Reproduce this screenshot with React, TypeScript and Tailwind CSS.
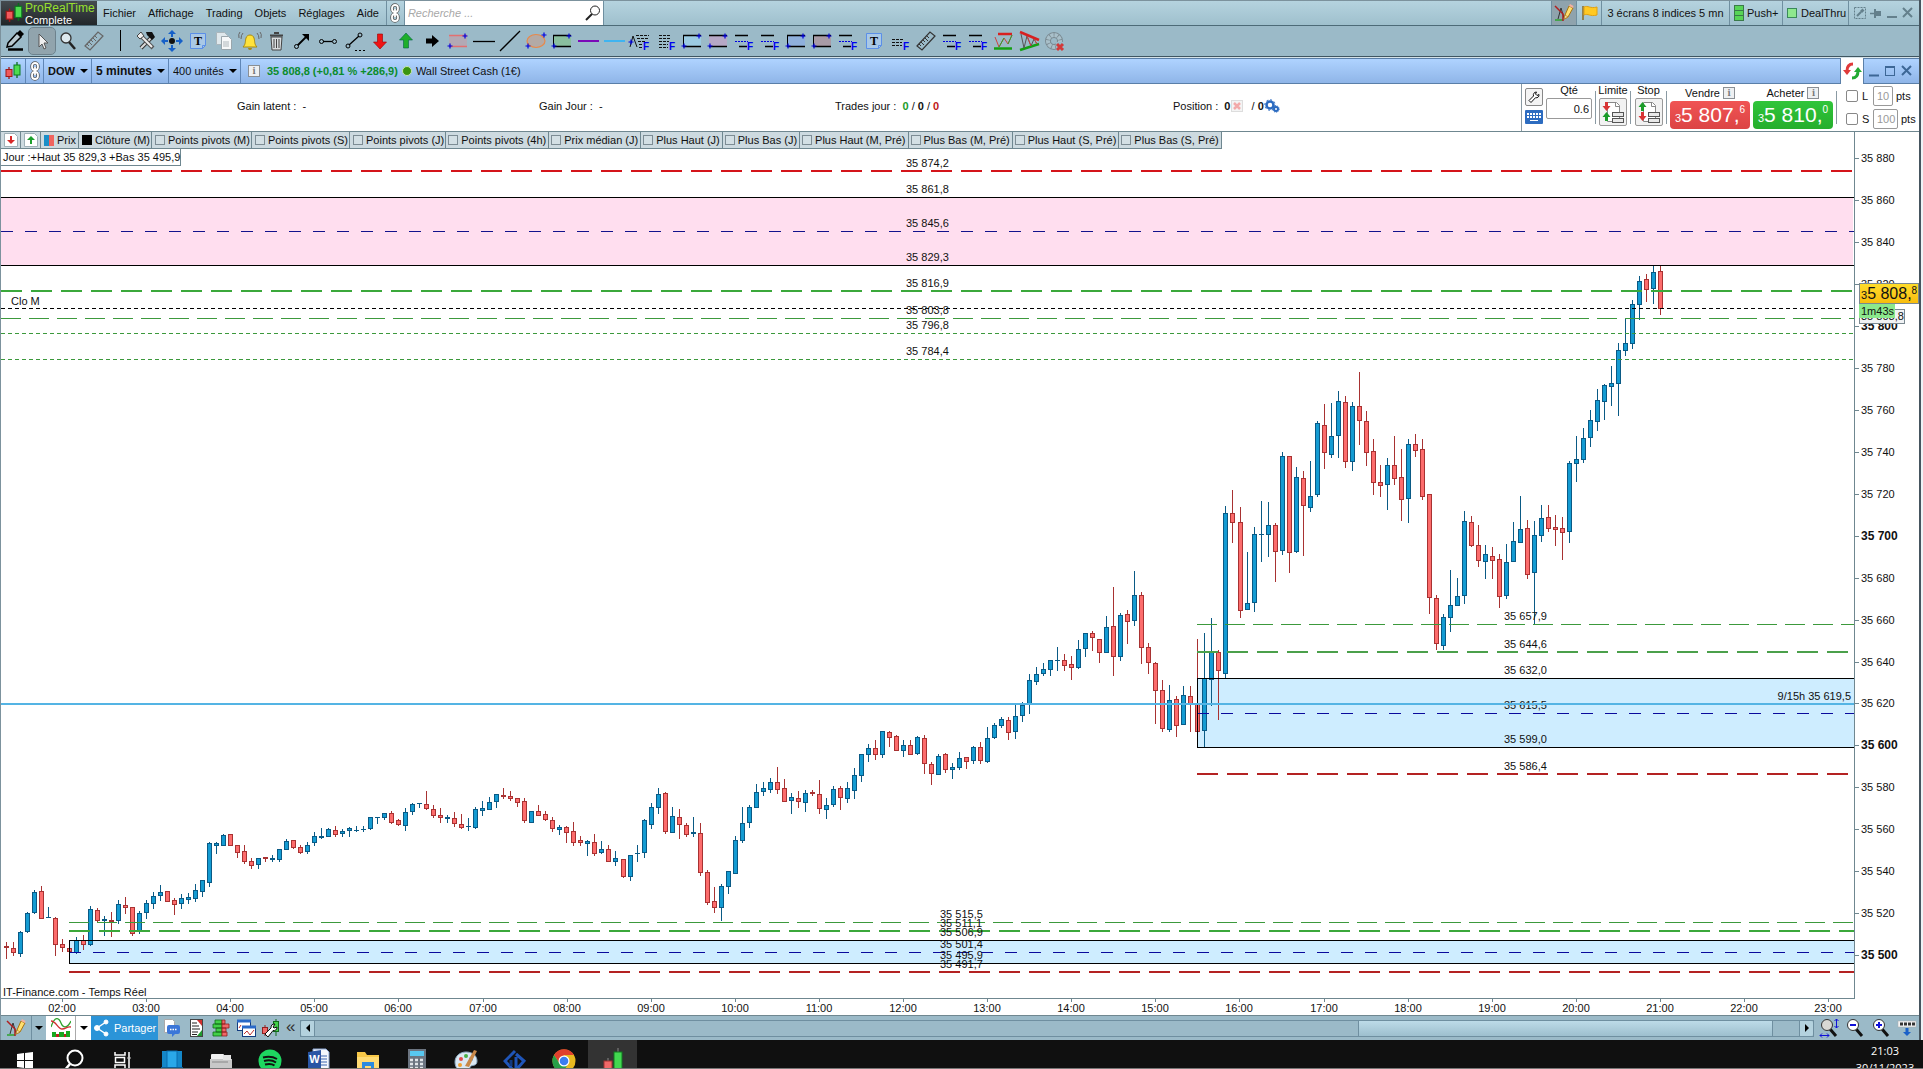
import React from "react"

// one candle per entry : direction (u/d), wick top, body top, body bottom, wick bottom
const CANDLES = `
d942 946 948 959,d942 948 953 956,u931 932 954 957,u912 913 932 933,u890 892 913 914,d886 891 919 919,
u907 917 918 918,d917 918 945 956,d939 944 948 952,d948 948 952 952,u937 940 953 954,d935 940 945 950,
u906 909 945 946,d908 910 921 922,u916 919 921 936,d912 920 922 937,u900 904 921 924,d897 905 908 914,
d907 907 934 936,u911 913 932 934,u900 903 913 919,u892 896 904 909,u885 892 896 901,d891 891 902 902,
d898 900 905 915,u894 898 904 909,u893 897 900 904,u884 890 899 902,u880 880 892 897,u842 843 883 887,
u842 843 846 854,u834 835 846 846,d834 834 846 846,d845 845 853 858,d845 851 862 864,d858 861 866 869,
u858 858 865 869,d857 857 859 862,u855 858 860 862,u849 849 860 862,u839 841 850 850,d840 840 848 849,
d845 847 853 854,u842 845 852 854,u832 836 843 846,u828 836 838 839,u828 829 837 837,d826 830 835 837,
u829 831 834 837,u827 828 831 837,u826 830 831 832,u826 829 830 832,u817 817 829 830,u817 817 818 824,
u813 813 818 820,d811 813 823 824,d819 820 825 826,u808 812 826 831,u803 804 812 815,u803 803 804 808,
d791 804 809 810,d805 809 816 818,d808 815 818 823,u815 817 819 823,d812 818 824 827,d814 824 828 829,
u818 826 827 831,u807 809 828 829,u801 808 811 816,u797 802 810 810,u794 794 802 808,d788 795 797 799,
d791 796 799 801,d798 798 803 807,d798 801 821 823,u811 811 823 823,d805 811 816 816,d811 814 820 821,
d817 820 829 832,u825 827 830 835,d826 827 833 843,d822 831 843 846,d836 840 843 846,u840 841 844 856,
d834 842 854 856,u841 849 853 854,d845 849 862 862,u851 858 862 866,d859 859 877 878,u855 855 877 881,
u845 853 854 862,u819 820 853 858,u803 807 825 829,u788 794 808 814,d792 793 832 834,u807 816 833 833,
d809 817 825 839,d823 825 835 837,u817 832 834 837,d823 833 873 876,d870 872 903 905,d887 901 908 913,
u884 886 908 921,u871 871 887 894,u836 840 874 874,u807 823 841 843,u805 807 823 828,u784 792 808 808,
u782 788 792 796,u778 782 790 793,d767 782 790 794,d779 788 802 802,u793 797 801 814,d791 798 802 808,
u790 793 803 812,d790 792 794 796,d780 794 809 814,u798 805 810 819,u786 789 805 807,d786 788 798 810,
u782 788 799 803,u768 775 791 799,u754 754 776 782,u744 748 755 762,d740 748 755 760,u731 731 755 758,
d731 732 738 747,d735 736 751 751,u740 745 751 757,d740 745 755 755,u736 737 754 755,d735 738 764 774,
d762 764 774 785,u754 756 775 775,d753 754 770 773,u763 767 770 779,u752 758 768 770,d757 757 762 769,
u746 747 761 764,d742 747 761 764,u727 738 762 763,u723 725 738 739,u717 719 726 728,d717 720 733 740,
u705 716 732 739,u702 705 716 722,u674 680 704 714,u667 674 682 685,u663 669 674 676,u660 660 670 676,
u647 660 661 671,d654 660 666 671,d656 664 668 680,u640 649 668 669,u633 633 649 657,d631 633 638 651,
d639 639 653 663,u616 627 653 653,d587 626 657 676,u613 615 657 661,d610 614 622 644,u571 595 621 626,
d592 595 648 664,d643 647 663 674,d662 663 691 724,d680 690 729 732,u685 700 730 732,d696 699 726 737,
u686 695 725 725,d686 696 704 732,d639 704 732 732,u633 678 731 747,u618 652 680 706,d650 652 671 720,
u506 513 674 678,d490 513 523 543,d507 522 611 618,u552 603 610 610,u527 534 603 612,u501 534 535 562,
u502 525 535 557,d523 525 552 582,u452 456 551 555,d456 456 553 573,u467 477 552 553,d471 478 506 556,
u461 496 508 512,u421 423 495 497,d404 425 453 469,u403 436 455 458,u391 401 436 458,d396 402 462 468,
u402 406 462 471,d372 406 421 445,d411 421 453 466,d439 451 483 495,d465 482 486 497,u458 465 485 510,
d436 465 479 485,d449 477 500 521,u439 444 499 523,d434 444 451 457,d439 449 497 500,d494 494 598 614,
d595 598 644 650,u614 617 646 650,u570 605 618 632,u578 596 606 606,u511 521 596 604,d516 522 546 547,
d525 545 561 567,u545 554 562 579,d547 556 561 579,d554 559 597 608,u544 562 596 599,u522 541 562 562,
u496 529 543 543,d520 528 575 579,u521 535 573 625,u505 518 536 542,d505 517 529 532,d515 527 530 546,
d517 528 533 560,u461 463 532 543,u436 459 464 482,u428 438 460 463,u410 420 438 447,u389 400 422 431,
u384 385 402 420,u366 383 387 406,u343 350 384 416,u319 343 351 356,u300 304 344 349,u276 281 305 320,
d274 279 290 302,u266 272 289 304,d266 271 309 315`
  .trim()
  .split(/,\s*/)
  .map(s => ({ up: s[0] === "u", v: s.slice(1).split(" ").map(Number) }))

type Level = { y: number, x?: number, color: string, dash?: string, w?: number }

const LEVELS: Level[] = [
  { y: 170, color: "#d4141a", dash: "21 9", w: 2 },
  { y: 197, color: "#000" },
  { y: 231, color: "#12128c", dash: "12 12" },
  { y: 265, color: "#000" },
  { y: 290, color: "#3ba83b", dash: "21 9", w: 2 },
  { y: 308, color: "#000", dash: "4 3" },
  { y: 318, color: "#3c993c", dash: "20 8" },
  { y: 333, color: "#3c993c", dash: "4 3" },
  { y: 359, color: "#3c993c", dash: "4 3" },
  { y: 624, x: 1197, color: "#3c993c", dash: "20 8" },
  { y: 651, x: 1197, color: "#4ba04b", dash: "21 9", w: 2 },
  { y: 678, x: 1197, color: "#000" },
  { y: 713, x: 1197, color: "#0a0a9c", dash: "12 12" },
  { y: 747, x: 1197, color: "#000" },
  { y: 773, x: 1197, color: "#b42222", dash: "21 9", w: 2 },
  { y: 922, x: 69, color: "#3c993c", dash: "20 8" },
  { y: 930, x: 69, color: "#3ba83b", dash: "21 9", w: 2 },
  { y: 940, x: 69, color: "#000" },
  { y: 952, x: 69, color: "#0a0a9c", dash: "12 12" },
  { y: 963, x: 69, color: "#000" },
  { y: 971, x: 69, color: "#b42222", dash: "21 9", w: 2 },
]

const LEVEL_LABELS: [number, number, string][] = [
  [906, 167, "35 874,2"], [906, 193, "35 861,8"], [906, 227, "35 845,6"], [906, 261, "35 829,3"],
  [906, 287, "35 816,9"], [906, 314, "35 803,8"], [906, 329, "35 796,8"], [906, 355, "35 784,4"],
  [940, 918, "35 515,5"], [940, 927, "35 511,1"], [940, 936, "35 506,9"], [940, 948, "35 501,4"],
  [940, 959, "35 495,9"], [940, 968, "35 491,7"],
  [1504, 620, "35 657,9"], [1504, 648, "35 644,6"], [1504, 674, "35 632,0"], [1504, 709, "35 615,5"],
  [1504, 743, "35 599,0"], [1504, 770, "35 586,4"],
  [11, 305, "Clo M"], [3, 996, "IT-Finance.com - Temps Réel"],
]

const PRICES = Array.from({ length: 20 }, (_, i) => 35880 - i * 20)
const HOURS = Array.from({ length: 22 }, (_, i) => i + 2)

const priceY = (p: number) => Math.round(158 + (35880 - p) * 2.098)
const candleX = (i: number) => 6 + i * 7 + Math.floor(i / 88)
const formatPrice = (p: number) => `35 ${String(p - 35000).padStart(3, "0")}`

function Chart() {
  return (
    <svg className="block h-full w-full" shapeRendering="crispEdges" aria-label="Wall Street Cash 5 minutes">
      <g transform="translate(-1 -132)" fontSize="11" fill="#111">
        <rect x="0" y="197" width="100%" height="69" fill="#ffdeef" />
        <rect x="69" y="940" width="100%" height="24" fill="#ceedff" />
        <rect x="1197" y="678" width="100%" height="70" fill="#ceedff" />
        {CANDLES.map(({ up, v }, i) => {
          const x = candleX(i)
          const h = Math.max(v[2] - v[1], 1)
          const line = up ? "#0a5a85" : "#a83232"
          return (
            <g key={i}>
              <rect x={x} y={v[0]} width="1" height={Math.max(v[3] - v[0], 1)} fill={line} />
              <rect x={x - 2} y={v[1]} width="5" height={h} fill={line} />
              {h > 2 && <rect x={x - 1} y={v[1] + 1} width="3" height={h - 2} fill={up ? "#149bd2" : "#fc6c6c"} />}
            </g>
          )
        })}
        {LEVELS.map((l, i) => {
          const w = l.w || 1
          return (
            <line key={i} x1={l.x || 1} x2="101%" y1={l.y + w / 2} y2={l.y + w / 2}
              stroke={l.color} strokeWidth={w} strokeDasharray={l.dash} />
          )
        })}
        <rect x="69" y="940" width="1" height="24" fill="#000" />
        <rect x="1197" y="678" width="1" height="70" fill="#000" />
        {LEVEL_LABELS.map(([x, y, t]) => <text key={t} x={x} y={y}>{t}</text>)}
        <rect x="0" y="703" width="101%" height="2" fill="#54b4e4" />
      </g>
      <text x="100%" dx="-3" y="568" textAnchor="end" fontSize="11" fill="#111">9/15h 35 619,5</text>
    </svg>
  )
}

function PriceAxis() {
  return (
    <div className="relative w-[65px] shrink-0 border-l border-[#6f8790]">
      <svg className="block h-full w-full">
        {PRICES.map(p => {
          const y = priceY(p) - 132
          const bold = p % 100 === 0
          return (
            <g key={p}>
              <rect x="0" y={y} width="4" height="1" fill="#6f8790" />
              <text x="6" y={y + 4} fontSize={bold ? 12 : 11} fontWeight={bold ? 700 : 400} fill="#111">{formatPrice(p)}</text>
            </g>
          )
        })}
      </svg>
      <div className="absolute top-[177px] left-1 h-[15px] w-[46px] overflow-hidden border border-[#7a8890] bg-[#f0f2f4] pl-px text-[11px] leading-[13px] whitespace-nowrap">35 803,8</div>
      <div className="absolute top-[172px] left-1 h-[14px] w-9 bg-[#8ce88c] pl-[2px] text-[11px] leading-[14px]">1m43s</div>
      <div className="absolute top-[151px] left-1 flex h-[21px] w-[60px] items-baseline border border-[#7a8890] bg-linear-to-b from-[#ffdc2a] to-[#f8bd0c] pl-px leading-[19px] whitespace-nowrap">
        <span className="text-[11px]">3</span>
        <span className="text-[16px]">5 808,</span>
        <span className="self-start text-[10px] leading-[14px]">8</span>
      </div>
    </div>
  )
}

function Chain() {
  return (
    <svg width="12" height="20" viewBox="0 0 12 20" fill="none">
      <g stroke="#555" strokeWidth="3.4">
        <rect x="3" y="2" width="6" height="7" rx="3" /><rect x="3" y="11" width="6" height="7" rx="3" /><path d="M6 6v8" />
      </g>
      <g stroke="#fff" strokeWidth="1.8">
        <rect x="3" y="2" width="6" height="7" rx="3" /><rect x="3" y="11" width="6" height="7" rx="3" /><path d="M6 6v8" />
      </g>
    </svg>
  )
}

function CandleLogo({ size = 18 }: { size?: number }) {
  return (
    <svg width={size} height={size} viewBox="0 0 18 18">
      <path d="M5 5v12" stroke="#a01818" strokeWidth="1.3" />
      <path d="M13 0v16" stroke="#0b6b1e" strokeWidth="1.3" />
      <rect x="2" y="7.500" width="6" height="7" fill="#f0595c" stroke="#a01818" />
      <rect x="10" y="3" width="6" height="10" fill="#4fdc50" stroke="#0b7b1e" />
    </svg>
  )
}

function PencilChart() {
  return (
    <svg width="20" height="20" viewBox="0 0 20 20" fill="none">
      <path d="M1 17h8" stroke="#2ea32e" strokeWidth="1.500" />
      <path d="M4 16 7 5l3 10 2-4" stroke="#333" />
      <path d="M1 3l8 8v7" stroke="#b02020" strokeWidth="1.500" />
      <path d="m10 16 1-4 4-9 4 2-5 9z" fill="#ffe070" stroke="#a87410" />
      <path d="m10 16 1-4 3 2z" fill="#f6deb0" stroke="#a87410" strokeWidth=".6" />
      <path d="m15 3 4 2 .500-2-3.500-2z" fill="#f3b0a0" />
    </svg>
  )
}

function Caret() {
  return <svg width="8" height="4" viewBox="0 0 8 4" className="pointer-events-none shrink-0"><path d="M0 0h8L4 4z" fill="#000" /></svg>
}

function InfoIcon() {
  return (
    <span className="flex h-3 w-3 items-center justify-center border border-[#8a8f94] bg-[#eef0f2] font-serif text-[10px] leading-none font-bold text-[#777]">i</span>
  )
}

const Plus = ({ x, y }: { x: number, y: number }) => (
  <path d={`M${x - 2.5} ${y}h5M${x} ${y - 2.5}v5`} stroke="#0000e0" strokeWidth="1.200" />
)

const FMark = () => <text x="16" y="22" fontSize="10" fontWeight="700" fill="#0000f0">F</text>

function RectIcon({ fill, line = "#000", open }: { fill: string, line?: string, open?: boolean }) {
  return (
    <>
      <rect x="4" y="8" width="18" height="10" fill={fill} />
      <path d="M4 7.500h18M4 18.500h18" stroke={line} strokeWidth="1.500" />
      {!open && <path d="M4.500 7v11" stroke={line} />}
      <Plus x={20} y={8} /><Plus x={5} y={18} />
    </>
  )
}

const FLines = () => (
  <>
    <path d="M4 7.500h13M8 18.500h8" stroke="#000" strokeWidth="1.500" />
    <path d="M4 13.500h13" stroke="#0000e0" strokeDasharray="2 1" />
    <FMark />
  </>
)

const TextNote = () => (
  <>
    <path d="M5.500 5.500h15v12l-3 3h-12z" fill="#a9c8e6" stroke="#5b8fe8" />
    <path d="M20.500 17.500h-3v3" fill="none" stroke="#5b8fe8" />
    <text x="13" y="17" textAnchor="middle" fontSize="12" fontWeight="700" fontFamily="Liberation Serif, serif">T</text>
  </>
)

const Ruler = ({ color }: { color: string }) => (
  <>
    <path d="M4 18 17 4l5 4L9 22z" fill="none" stroke={color} strokeWidth="1.200" />
    <path d="m6 16 2 2m0-4 3 3m-1-5 2 2m0-4 3 3m-1-5 2 2" stroke={color} />
  </>
)

const Magnifier = () => (
  <>
    <path d="m14 14 6 7" stroke="#222" strokeWidth="2.500" />
    <circle cx="11" cy="10" r="5" fill="#dce8ee" stroke="#333" strokeWidth="1.300" />
  </>
)

const TOOLS: [string, React.ReactNode][] = [
  ["Crayon", <><path d="m5 15 9-10 4 4-9 9-5 1z" fill="#b9c9d0" stroke="#000" strokeWidth="1.500" /><path d="m14 5 3-3 4 4-3 3z" fill="#000" /><path d="M5 21.500h15" stroke="#000" strokeWidth="2.500" /></>],
  ["Curseur", <path d="M10 6v13l3-3 2 5 2-1-2-5h4z" fill="#eee" stroke="#555" />],
  ["Zoom", <Magnifier />],
  ["Règle", <Ruler color="#666" />],
  ["", <path d="M13.500 2v21" stroke="#000" />],
  ["Outils", <><path d="m8 20 12-12" stroke="#333" strokeWidth="4" /><path d="m8 20 12-12" stroke="#ddd" strokeWidth="2" /><path d="m6 6 14 14" stroke="#555" strokeWidth="4" /><path d="m6 6 13 13" stroke="#eee" strokeWidth="2" /><path d="M13 4h6l3 5-3 3-5-5z" fill="#111" /><path d="M4 8l4-4 3 4-4 3z" fill="#eee" stroke="#444" /></>],
  ["Déplacer", <><path d="m13 2 4 4h-3v3h-2V6H9zm0 22 4-4h-3v-3h-2v3H9zM2 13l4-4v3h3v2H6v3zm22 0-4-4v3h-3v2h3v3z" fill="#1660c8" /><circle cx="13" cy="13" r="3" fill="#111" /></>],
  ["Texte", <TextNote />],
  ["Copier", <><path d="M5.500 4.500h8l3 3v9h-11z" fill="#dfe8ec" stroke="#aab6bc" /><path d="M10.500 8.500h7l3 3v10h-10z" fill="#f6f8f9" stroke="#9aa6ac" /><path d="M12 14h6m-6 2h6m-6 2h6" stroke="#b0b8bc" /></>],
  ["Alerte", <><path d="M6 19c3-3 2-6 3-9 1-4 7-4 8 0 1 3 0 6 3 9z" fill="#ffe23a" stroke="#a88a10" /><path d="M11 20a2 2 0 0 0 4 0z" fill="#a88a10" /><path d="M6 5q-2 2-2 6m16-6q2 2 2 6M3 4q-2 2-1 6M23 4q2 2 1 6" fill="none" stroke="#666" /></>],
  ["Supprimer", <><path d="M8 9h11l-1 13H9z" fill="#d8dcde" stroke="#444" /><path d="M7 7.500h13M11 5h5" stroke="#444" strokeWidth="2" /><path d="M11 11v9m2.500-9v9m2.500-9v9" stroke="#444" /></>],
  ["Flèche", <><path d="m8 18 9-9" stroke="#000" strokeWidth="1.800" /><path d="M13 6h7v7z" fill="#000" /><circle cx="7.500" cy="18.500" r="2" fill="#9bbac8" stroke="#000" /></>],
  ["Segment", <><path d="M8 13.500h9" stroke="#000" strokeWidth="1.300" /><circle cx="6.500" cy="13.500" r="2" fill="none" stroke="#000" /><circle cx="19.500" cy="13.500" r="2" fill="none" stroke="#000" /></>],
  ["Segment libre", <><path d="m8 17 10-9" stroke="#000" strokeWidth="1.300" /><circle cx="7" cy="18" r="2" fill="none" stroke="#000" /><circle cx="19" cy="7" r="2" fill="none" stroke="#000" /><path d="M14 22.500h10" stroke="#000" strokeDasharray="2 2" /></>],
  ["Flèche rouge", <path d="M10.500 6h5v8h4L13 21l-6.500-7h4z" fill="#f01414" stroke="#900" strokeWidth=".6" />],
  ["Flèche verte", <path d="M10.500 20h5v-8h4L13 5l-6.500 7h4z" fill="#1fae2a" stroke="#064" strokeWidth=".6" />],
  ["Flèche noire", <path d="M7 10.500h6V7l7 6-7 6v-3.500H7z" fill="#000" />],
  ["Canal", <RectIcon fill="#b3a9b4" line="#e27070" open />],
  ["Horizontale", <path d="M2 13.500h22" stroke="#000" strokeWidth="1.300" />],
  ["Droite", <path d="M3 23 23 3" stroke="#000" strokeWidth="1.300" />],
  ["Ellipse", <><ellipse cx="13" cy="13" rx="9" ry="6.500" fill="#b3aaa6" stroke="#e8894a" strokeWidth="1.200" /><Plus x={21} y={7} /><Plus x={5} y={18} /></>],
  ["Rectangle vert", <RectIcon fill="#8abf9f" />],
  ["Ligne violette", <path d="M3 13h21" stroke="#7a0ab8" strokeWidth="2" />],
  ["Ligne bleue", <path d="M3 13h21" stroke="#3fb4f0" strokeWidth="2" />],
  ["Fibonacci 1", <><path d="m3 19 3-11 4 11" fill="none" stroke="#111" /><Plus x={4} y={14} /><path d="M9 7.500h13M10 10.500h12M11 13.500h8M12 16.500h4M12 19.500h4" stroke="#111" strokeDasharray="3 1" /><FMark /></>],
  ["Fibonacci 2", <><path d="M6 7.500h12M6 10.500h12M6 13.500h10M6 16.500h9M6 19.500h9" stroke="#111" strokeDasharray="3 1" /><FMark /></>],
  ["Rectangle cyan", <RectIcon fill="#9ccbe2" />],
  ["Rectangle rose", <RectIcon fill="#b6a8c6" open />],
  ["Fibonacci 3", <FLines />],
  ["Fibonacci 4", <FLines />],
  ["Rectangle bleu", <RectIcon fill="#8fb0dc" />],
  ["Rectangle mauve", <RectIcon fill="#a89ba6" />],
  ["Fibonacci 5", <FLines />],
  ["Note", <TextNote />],
  ["Fibonacci 6", <><path d="M5 11.500h12M5 14.500h10M5 17.500h10" stroke="#111" strokeDasharray="3 1" /><FMark /></>],
  ["Mesure", <Ruler color="#333" />],
  ["Fibonacci 7", <FLines />],
  ["Fibonacci 8", <FLines />],
  ["Figure 1", <><path d="M7 6h14" stroke="#d82020" strokeWidth="2.500" /><path d="M3 20.500h18" stroke="#14a014" strokeWidth="2.500" /><path d="m4 9 4 10 5-9 4 6 4-9" fill="none" stroke="#d04040" /><path d="m8 19 5-9m4 6 4-9" stroke="#2fa02f" /></>],
  ["Figure 2", <><path d="m3 4 19 8" stroke="#d82020" strokeWidth="2.500" /><path d="m3 22 19-6" stroke="#14a014" strokeWidth="2.500" /><path d="m4 6 3 14 3-12 4 10 3-7 3 5" fill="none" stroke="#555" /><path d="m10 8 4 10m3-7 3 5" stroke="#d04040" /></>],
  ["Cycle", <><circle cx="11" cy="13" r="6" fill="none" stroke="#7b8b93" strokeWidth="6" /><circle cx="11" cy="13" r="6" fill="none" stroke="#a9c0ca" strokeWidth="4" strokeDasharray="3.200 .8" /><rect x="13" y="14" width="9" height="9" fill="#9bbac8" /><path d="m14 16 6 6m0-6-6 6" stroke="#d23a3a" strokeWidth="3" /></>],
]

const INDICATORS = [
  "Points pivots (M)", "Points pivots (S)", "Points pivots (J)", "Points pivots (4h)", "Prix médian (J)", "Plus Haut (J)",
  "Plus Bas (J)", "Plus Haut (M, Pré)", "Plus Bas (M, Pré)", "Plus Haut (S, Pré)", "Plus Bas (S, Pré)",
]

function MenuBar() {
  return (
    <header className="flex h-[25px] items-stretch border-b border-[#4d6b78] bg-linear-to-b from-[#b5d3df] to-[#9fc0cd]">
      <div className="flex w-24 items-center gap-px bg-linear-to-b from-[#454b4f] to-[#22272a] pl-[3px]">
        <CandleLogo size={20} />
        <div className="whitespace-nowrap">
          <div className="text-[12px] leading-[13px] text-[#97e02e]">ProRealTime</div>
          <div className="text-[11px] leading-[10px] text-white">Complete</div>
        </div>
      </div>
      <nav className="flex items-center gap-3 pr-[7px] pl-[6px]">
        {["Fichier", "Affichage", "Trading", "Objets", "Réglages", "Aide"].map(m => (
          <button key={m} type="button">{m}</button>
        ))}
      </nav>
      <div className="flex w-[19px] items-center justify-center border-x border-[#6f8fa0]"><Chain /></div>
      <label className="flex w-[199px] items-center border-r border-[#6f8fa0] bg-white pr-[2px] pl-[3px]">
        <input aria-label="Recherche" placeholder="Recherche ..." className="min-w-0 flex-1 text-[11px] italic outline-none placeholder:text-[#a8a8a8]" />
        <svg width="16" height="16" viewBox="0 0 16 16"><circle cx="10" cy="5.500" r="4.500" fill="none" stroke="#222" /><path d="m7 9-6 6" stroke="#222" strokeWidth="2" /></svg>
      </label>
      <div className="ml-auto flex items-stretch [&>*]:flex [&>*]:items-center [&>*]:border-r [&>*]:border-[#6f8fa0]">
        <button type="button" aria-label="Dessin" className="w-[26px] justify-center border-l bg-[#8fa3ad]"><PencilChart /></button>
        <button type="button" aria-label="Drapeau" className="w-[25px] justify-center">
          <svg width="17" height="16" viewBox="0 0 17 16"><path d="M2 1v14" stroke="#8a6a20" strokeWidth="1.500" /><path d="M3 2c4-2 6 2 13 0v8c-7 2-9-2-13 0z" fill="#ffc922" stroke="#e0a010" /></svg>
        </button>
        <button type="button" className="w-32 justify-center">3 écrans 8 indices 5 mn</button>
        <button type="button" className="w-[53px] gap-[3px] pl-1">
          <span className="flex h-4 w-[10px] flex-col divide-y divide-[#3a7a4a] border border-[#3a7a4a] bg-[#57d457]"><i className="flex-1" /><i className="flex-1" /><i className="flex-1" /></span>Push+
        </button>
        <button type="button" className="w-[66px] gap-1 pl-1"><span className="h-[10px] w-[10px] border border-[#3a8a5a] bg-[#8ee88e]" />DealThru</button>
        <div className="gap-[5px] border-r-0! pr-[6px] pl-1">
          <svg width="60" height="14" viewBox="0 0 60 14" fill="none" stroke="#64808c">
            <rect x="1.500" y="1.500" width="11" height="11" strokeDasharray="2 1" /><path d="m4 10 4-4" strokeWidth="2" /><path d="M10 3 8 5l1 1 2-2" strokeWidth="1.500" />
            <path d="M17 7.500h4" strokeWidth="1.500" /><path d="M21 3h2v2h5v5h-5v2h-2z" fill="#64808c" stroke="none" />
            <path d="M34 11h10M50 2l9 9m0-9-9 9" strokeWidth="2" />
          </svg>
        </div>
      </div>
    </header>
  )
}

function Toolbar() {
  return (
    <div className="flex h-[31px] items-center border-b border-[#3f5661] bg-[#9bbac8] pl-[2px]">
      {TOOLS.map(([name, icon], i) => {
        const svg = <svg width="26" height="26" viewBox="0 0 26 26">{icon}</svg>
        return name
          ? <button key={i} type="button" title={name} className={i === 1 ? "rounded-sm bg-[#91a4ad] outline outline-[#6d828d]" : ""}>{svg}</button>
          : <span key={i}>{svg}</span>
      })}
    </div>
  )
}

function Picker({ label, value, className }: { label: string, value: string, className: string }) {
  return (
    <label className="relative flex items-center border-r border-[#5f86b6]">
      <select aria-label={label} className={`h-full appearance-none pl-[4px] outline-none ${className}`} defaultValue={value}>
        <option>{value}</option>
      </select>
      <span className="pointer-events-none absolute right-[3px]"><Caret /></span>
    </label>
  )
}

function TitleBar() {
  return (
    <div className="flex h-[26px] items-stretch border-y border-[#5a7fa8] bg-linear-to-b from-[#afd3ff] to-[#8fb5e8]">
      <div className="flex w-[25px] items-center justify-center border-r border-[#5f86b6]"><CandleLogo /></div>
      <div className="flex w-[18px] items-center justify-center border-r border-[#5f86b6]"><Chain /></div>
      <Picker label="Valeur" value="DOW" className="w-[47px] font-bold" />
      <Picker label="Unité de temps" value="5 minutes" className="w-[76px] text-[12px] font-bold" />
      <Picker label="Historique" value="400 unités" className="w-[71px]" />
      <div className="flex items-center pl-[7px]">
        <InfoIcon />
        <span className="ml-[7px] font-bold text-[#0c8c2c]">35 808,8 (+0,81 % +286,9)</span>
        <span className="mx-[4px] h-[10px] w-[10px] rounded-full border border-[#c8e6b0] bg-[#3a9410]" />
        <span>Wall Street Cash (1€)</span>
      </div>
      <div className="-my-px ml-auto flex w-6 items-center justify-center border-x border-[#5a7fa8] bg-white">
        <svg width="19" height="18" viewBox="0 0 19 18" fill="none">
          <path d="M10 2c-5 0-6 3-6 7" stroke="#e03a3a" strokeWidth="3" /><path d="M0 8h8l-4 5z" fill="#e03a3a" />
          <path d="M9 16c5 0 6-3 6-7" stroke="#22aa33" strokeWidth="3" /><path d="M11 10h8l-4-5z" fill="#22aa33" />
        </svg>
      </div>
      <svg className="my-auto mr-[7px] ml-[5px]" width="43" height="12" viewBox="0 0 43 12" fill="none" stroke="#3d6796">
        <path d="M0 10.500h10M33 1l9 9m0-9-9 9" strokeWidth="2" /><rect x="16.500" y="1.500" width="9" height="9" /><path d="M16 2h10" strokeWidth="2" />
      </svg>
    </div>
  )
}

function OrderIcon({ flip }: { flip?: boolean }) {
  return (
    <svg width="24" height="24" viewBox="0 0 24 24">
      <path d="M6.500 2.500h9l3 3v16h-12z" fill="#fff" stroke="#888" />
      <path d="M14.500 2.500v4h4" fill="none" stroke="#888" />
      <path d="M4 2h3v4h2.500l-4 5-4-5H4z" fill={flip ? "#1c9c2a" : "#d83434"} transform={flip ? "rotate(180 5.500 6.500)" : undefined} />
      <path d="M4 21h3v-4h2.500l-4-5-4 5H4z" fill={flip ? "#d83434" : "#1c9c2a"} transform={flip ? "rotate(180 5.500 16.500)" : undefined} />
      <rect x="11.500" y="12.500" width="11" height="4" fill="#e8e8e8" stroke="#555" /><rect x="11.500" y="18.500" width="11" height="4" fill="#e8e8e8" stroke="#555" />
    </svg>
  )
}

function DealButton({ label, last, main, color }: { label: string, last: string, main: string, color: string }) {
  return (
    <div className="flex w-20 flex-col items-center">
      <span className="flex h-[17px] items-center gap-[3px]">{label}<InfoIcon /></span>
      <button type="button" className={`flex h-7 w-20 items-baseline justify-center rounded-sm leading-7 text-white ${color}`}>
        <span className="text-[11px]">3</span>
        <span className="text-[21px]">{main}</span>
        <span className="self-start text-[10px] leading-[18px]">{last}</span>
      </button>
    </div>
  )
}

function Distance({ id, value, width }: { id: string, value: string, width: string }) {
  return (
    <div className="flex h-[21px] items-center">
      <input id={`use-${id}`} type="checkbox" className="h-3 w-3 appearance-none rounded-xs border border-[#888] bg-white" />
      <label htmlFor={`use-${id}`} className="w-[15px] pl-[4px]">{id}</label>
      <input aria-label={`Distance ${id}`} defaultValue={value} className={`h-5 rounded-xs border border-[#999] pl-[3px] text-[#999] outline-none ${width}`} />
      <span className="pl-[3px]">pts</span>
    </div>
  )
}

const Sep = () => <span className="mt-[7px] h-[33px] w-px bg-[#8a9aa3]" />

function TradingPanel() {
  return (
    <section className="flex h-[47px] bg-white">
      <div className="flex flex-1 items-center pb-[3px] pl-[236px] whitespace-pre">
        <span className="w-[302px]">Gain latent :  -</span>
        <span className="w-[296px]">Gain Jour :  -</span>
        <span className="w-[338px]">Trades jour :  <b className="text-[#1c9c2a]">0</b> / <b>0</b> / <b className="text-[#c01818]">0</b></span>
        <span className="flex items-center">Position :  <b>0</b>
          <svg className="mr-[2px] ml-px" width="12" height="12" viewBox="0 0 12 12"><rect x=".5" y=".5" width="11" height="11" fill="#f4f4f4" stroke="#ddd" /><path d="m3 3 6 6m0-6-6 6" stroke="#f3aaaa" strokeWidth="2.500" /></svg>
          {"  / "}<b>0</b>
          <svg width="16" height="14" viewBox="0 0 16 14" fill="none" stroke="#2a6ac0"><circle cx="6" cy="6" r="3.500" strokeWidth="2.500" /><circle cx="6" cy="6" r="5.200" strokeDasharray="2 2" /><circle cx="12" cy="10" r="2" strokeWidth="2" /><circle cx="12" cy="10" r="3.200" strokeDasharray="1 1" /></svg>
        </span>
      </div>
      <div className="flex w-[398px] gap-[3px] border-l border-[#8a9aa3] pl-[3px]">
        <div className="flex flex-col gap-1 pt-1">
          <button type="button" aria-label="Options" className="flex h-[18px] w-[18px] items-center justify-center rounded-xs border border-[#888] bg-[#f4f4f4]">
            <svg width="14" height="14" viewBox="0 0 14 14"><path d="M2 10.500 6.500 6c-.6-2 .6-4 3-4L8.500 4l1.500 1.500 2-1c.3 2.400-1.500 3.600-3.500 3.200L4 12.500z" fill="#fff" stroke="#111" /></svg>
          </button>
          <button type="button" aria-label="Clavier">
            <svg width="18" height="14" viewBox="0 0 18 14"><rect width="18" height="14" rx="1" fill="#2d6cc0" /><path d="M2 4h14M2 7h14" stroke="#fff" strokeWidth="2" strokeDasharray="2 1" /><path d="M5 10.500h8" stroke="#fff" /></svg>
          </button>
        </div>
        <label className="flex w-[46px] flex-col items-center leading-[13px]">Qté
          <input defaultValue="0.6" className="mt-px h-[21px] w-full rounded-xs border border-[#999] pr-[2px] text-right outline-none" />
        </label>
        <Sep />
        <label className="flex w-7 flex-col items-center leading-[13px]">Limite
          <button type="button" className="mt-px flex h-7 w-7 items-center justify-center rounded-xs border border-[#999] bg-[#f2f2f2]"><OrderIcon /></button>
        </label>
        <Sep />
        <label className="flex w-[29px] flex-col items-center leading-[13px]">Stop
          <button type="button" className="mt-px flex h-7 w-7 items-center justify-center rounded-xs border border-[#999] bg-[#f2f2f2]"><OrderIcon flip /></button>
        </label>
        <Sep />
        <DealButton label="Vendre" main="5 807," last="6" color="bg-linear-to-b from-[#f05454] to-[#dc4444]" />
        <DealButton label="Acheter" main="5 810," last="0" color="bg-linear-to-b from-[#30c53a] to-[#25ae2c]" />
        <Sep />
        <div className="flex flex-col justify-center gap-[2px] pl-[6px]">
          <Distance id="L" value="10" width="w-[20px]" />
          <Distance id="S" value="100" width="w-[25px]" />
        </div>
      </div>
    </section>
  )
}

function IndicatorBar() {
  return (
    <div className="absolute top-0 left-0">
      <div className="flex h-[17px] w-max border-b border-[#6f8790] [&>*]:flex [&>*]:items-center [&>*]:border-r [&>*]:border-[#6f8790] [&>*]:bg-[#cddae0]">
        {["#d82828", "#1ea02e"].map((c, i) => (
          <button key={c} type="button" aria-label={i ? "Monter" : "Descendre"} className="w-5 justify-center">
            <svg width="14" height="14" viewBox="0 0 14 14"><path d="M.5.500h10l3 3v10H.5z" fill="#fff" stroke="#9fb0b8" /><path d="M7 11 3 7h3V3h2v4h3z" fill={c} transform={i ? "rotate(180 7 7)" : undefined} /></svg>
          </button>
        ))}
        <div className="gap-[3px] pr-[2px] pl-[3px]"><span className="h-[11px] w-[10px] bg-linear-to-r from-[#1a8fc8] from-50% to-[#f0645f] to-50%" />Prix</div>
        <div className="gap-[3px] pr-px pl-[3px]"><span className="h-[10px] w-[10px] bg-black" />Clôture (M)</div>
        {INDICATORS.map((t, i) => (
          <label key={t} className={i < 3 ? "gap-[3px] pr-px pl-[3px]" : "gap-[3px] px-[2px]"}>
            <input type="checkbox" className="h-[10px] w-[10px] appearance-none border border-[#7d8c94] bg-[#d3dfe4]" />{t}
          </label>
        ))}
      </div>
      <div className="flex h-[17px] w-[180px] items-center border-r border-b border-[#6f8790] bg-white pl-[2px] whitespace-nowrap">Jour :+Haut 35 829,3 +Bas 35 495,9</div>
    </div>
  )
}

function TimeAxis() {
  return (
    <div className="flex h-[17px] bg-white">
      <svg className="block h-full w-full border-t border-[#6f8790]">
        {HOURS.map((h, i) => {
          const x = 61 + Math.round(i * 84.1)
          return (
            <g key={h}>
              <rect x={x} y="0" width="1" height="3" fill="#6f8790" />
              <text x={x} y="13" fontSize="11" textAnchor="middle" fill="#111">{String(h).padStart(2, "0")}:00</text>
            </g>
          )
        })}
      </svg>
      <div className="w-16 shrink-0" />
    </div>
  )
}

function BottomBar() {
  return (
    <div className="flex h-[25px] items-stretch border-t border-[#6f8790] bg-[#9bbac8]">
      <button type="button" aria-label="Dessin" className="flex w-[31px] items-center justify-center border-r border-[#6f8fa0]"><PencilChart /></button>
      <button type="button" aria-label="Menu dessin" className="flex w-[14px] items-center justify-center"><Caret /></button>
      <button type="button" aria-label="Indicateurs" className="flex w-[30px] items-center justify-center border-r border-[#aaa] bg-white">
        <svg width="20" height="20" viewBox="0 0 20 20" fill="none"><path d="M0 9C4-3 8 0 10 5s6 6 10-2" stroke="#2ea32e" strokeWidth="1.300" /><path d="M0 3c5 0 7 8 11 8s5-3 9-2" stroke="#d03030" strokeWidth="1.300" /><path d="M1 19v-5h4v2h3v-2h5v2h2v-3h4v6z" fill="#18a820" /><path d="M5 19v-3h3v3m5 0v-3h2v3" fill="#c02020" /></svg>
      </button>
      <button type="button" aria-label="Menu indicateurs" className="flex w-[15px] items-center justify-center bg-white"><Caret /></button>
      <button type="button" className="flex w-[67px] items-center gap-[5px] bg-[#2b94d8] pl-[3px] text-white">
        <svg width="15" height="18" viewBox="0 0 15 18" fill="#fff" stroke="#fff" className="shrink-0"><path d="M12 3 3 9l9 6" fill="none" strokeWidth="1.500" /><circle cx="12" cy="3" r="2" /><circle cx="3" cy="9" r="2.500" /><circle cx="12" cy="15" r="2" /></svg>
        Partager
      </button>
      <div className="flex items-center gap-[5px] pl-[3px]">
        <svg width="20" height="20" viewBox="0 0 20 20"><path d="M3.500 1.500h8l2 2v11h-10z" fill="#fff" stroke="#aaa" /><path d="M8 7h9q2 0 2 2v5q0 2-2 2h-3l-3 3v-3H8q-2 0-2-2V9q0-2 2-2z" fill="#3b76d8" /><path d="M9 11.500h7" stroke="#fff" strokeWidth="1.500" strokeDasharray="1.500 1" /></svg>
        <svg width="20" height="20" viewBox="0 0 20 20"><rect x="4.500" y="1.500" width="12" height="17" fill="#fff" stroke="#444" /><path d="M11 2h5v6z" fill="#d03030" /><path d="M16 18h-5l5-6z" fill="#209a30" /><path d="M6 5h5M6 8h7M6 11h8M6 14h6M6 16.500h5" stroke="#222" /></svg>
        <svg width="20" height="20" viewBox="0 0 20 20" strokeWidth=".8"><path d="M4 2h7v4H4zM2 6h9v4H2zM5 10h6v4H5zM2 14h9v4H2z" fill="#42d048" stroke="#106a18" /><path d="M11 2h3v4h-3zM11 6h7v4h-7zM11 10h4v4h-4zM11 14h5v4h-5z" fill="#f06868" stroke="#902020" /></svg>
        <svg width="20" height="20" viewBox="0 0 20 20"><rect x="1.500" y="2.500" width="13" height="10" fill="#fff" stroke="#123c80" /><path d="M1 3h14" stroke="#2a6ac8" strokeWidth="3" /><rect x="6.500" y="8.500" width="13" height="10" fill="#fff" stroke="#123c80" /><path d="M6 9h14" stroke="#2a6ac8" strokeWidth="3" /><path d="m8 16 3-3 3 4 4-5M3 10l2-3" fill="none" stroke="#c03030" /></svg>
        <svg width="20" height="20" viewBox="0 0 20 20"><path d="M15 1v17" stroke="#106a18" /><rect x="12.500" y="3.500" width="5" height="10" fill="#42d048" stroke="#106a18" /><path d="M4 7v11" stroke="#902020" /><rect x="1.500" y="9.500" width="5" height="6" fill="#f06868" stroke="#902020" /><path d="m4 16 6-6c0-3 1-4 4-4l-2 3 1 1 3-1c0 3-2 4-4 3.500L7 19z" fill="#fff" stroke="#111" /></svg>
        <span className="-mt-1 text-[17px] leading-none text-[#333]">«</span>
      </div>
      <div className="my-auto ml-[5px] flex h-[17px] flex-1 border border-[#6f8fa0]">
        <button type="button" aria-label="Reculer" className="flex w-[14px] items-center justify-center rounded-l-xs border-r border-[#6f8fa0] bg-[#b4d2de]"><svg width="4" height="8" viewBox="0 0 4 8"><path d="M4 0v8L0 4z" /></svg></button>
        <div className="flex flex-1 justify-end pr-[26px]">
          <div className="w-[28.500%] border-x border-[#6f8fa0] bg-linear-to-b from-[#bddbe8] to-[#9dbfce]" />
        </div>
        <button type="button" aria-label="Avancer" className="flex w-[14px] items-center justify-center rounded-r-xs border-l border-[#6f8fa0] bg-[#b4d2de]"><svg width="4" height="8" viewBox="0 0 4 8"><path d="M0 0v8l4-4z" /></svg></button>
      </div>
      <div className="flex items-center gap-[6px] pr-[2px] pl-[5px]">
        {[0, 1, 2].map(i => (
          <svg key={i} width="20" height="20" viewBox="0 0 20 20">
            <path d="m11 11 6 7" stroke="#111" strokeWidth="3" /><circle cx="8" cy="7" r="5.500" fill={i ? "#fff" : "#d8d8d4"} stroke="#333" />
            {i > 0 && <path d={i === 1 ? "M5 7h6" : "M5 7h6M8 4v6"} stroke="#1010d8" strokeWidth="2" />}
            {i === 0 && <path d="M17.500 1v9M15.500 3l2-2 2 2m-4 5 2 2 2-2M1 17.500h9M3 15.500l-2 2 2 2m5-4 2 2-2 2" fill="none" stroke="#1010d8" />}
          </svg>
        ))}
        <svg width="20" height="20" viewBox="0 0 20 20"><rect x="1" y="3" width="18" height="6" fill="#f4f4f4" stroke="#aaa" strokeWidth=".5" /><path d="M3 6h15" stroke="#333" strokeWidth="3" strokeDasharray="3 1" /><path d="M8.500 10h3v4H14l-4 4-4-4h2.500z" fill="#1a60c8" /></svg>
      </div>
    </div>
  )
}

const APPS: [string, React.ReactNode][] = [
  ["Démarrer", <path d="m4 6 7-1v7H4zm8-1 8-1v8h-8zM4 13h7v7l-7-1zm8 0h8v8l-8-1z" fill="#fff" />],
  ["Rechercher", <g fill="none" stroke="#fff" strokeWidth="2"><circle cx="13" cy="10" r="7.500" /><path d="m8 16-6 7" strokeWidth="2.500" /></g>],
  ["Vue des tâches", <path d="M4 4v3h10V4M4 20v-3h10v3M4.500 9.500h9v5h-9zM18 4v5m0 2v9M16.500 10h3" fill="none" stroke="#fff" strokeWidth="1.500" />],
  ["Téléphone", <><path d="M2 3h20v17H2z" fill="#1487c8" /><rect x="7" y="3" width="10" height="17" fill="#2aa8e8" stroke="#0b6cae" /><path d="M1 20h22" stroke="#0b5d98" strokeWidth="2" /></>],
  ["Imprimante", <><rect x="2" y="6" width="13" height="8" rx="1" fill="#f0f0f0" /><path d="M1 11h22v10H1z" fill="#c8c8c8" /><path d="M14 7h8v5h-8z" fill="#e4e4e4" /><path d="M3 14h16" stroke="#888" /></>],
  ["Spotify", <><circle cx="12" cy="13" r="11.500" fill="#1ed760" /><path d="M5 9.500q8-2 14 1.500M6 13q7-2 12 1.500M7 16.500q6-1.500 9.500 1" fill="none" stroke="#111" strokeWidth="2" /></>],
  ["Word", <><path d="M6 1h13l3 3v20H6z" fill="#f4f7fc" stroke="#8aa4d0" /><path d="M13 8h7m-7 3h7m-7 3h7m-7 3h7" stroke="#3a64b0" /><path d="M1 4l13-2v20L1 20z" fill="#2a55a4" /><text x="7.500" y="15" textAnchor="middle" fontSize="11" fontWeight="700" fill="#fff">W</text></>],
  ["Explorateur", <><path d="M1 4h8l2 3h12v17H1z" fill="#f8c848" /><path d="M1 9h22v13H1z" fill="#ffdb74" /><path d="M6 14h12v8h-3v-4H9v4H6z" fill="#2a8ae0" /></>],
  ["Calculatrice", <><rect x="3" y="1" width="18" height="24" fill="#6b7480" /><rect x="5" y="3" width="14" height="5" fill="#58c8f0" /><path d="M5 12h14M5 16h14M5 20h14" stroke="#e0e4e8" strokeWidth="2.500" strokeDasharray="3 2" /></>],
  ["Paint", <><path d="M12 4c7 0 11 4 11 9s-4 4-6 5 0 6-6 6S1 20 1 14 6 4 12 4z" fill="#dbe8f2" stroke="#8aa8c0" /><circle cx="7" cy="11" r="2" fill="#e04848" /><circle cx="6" cy="17" r="2" fill="#f0a030" /><circle cx="12" cy="8" r="2" fill="#48b048" /><circle cx="17" cy="11" r="2" fill="#3080d8" /><path d="m11 18 9-16 3 1-8 16z" fill="#c88848" /></>],
  ["IG", <g fill="none" stroke="#1f55b8" strokeWidth="3"><path d="M12 3 2 13l9 10" /><path d="m13 6 8 7-8 9V9" /><path d="M8 12v6" stroke="#123a80" /></g>],
  ["Chrome", <><circle cx="12" cy="13" r="11.500" fill="#e8b820" /><path d="M2 7a11.500 11.500 0 0 1 20 0H12l-4 9z" fill="#e0402e" /><path d="M2 7a11.500 11.500 0 0 0 9 17.400l5-8.400H8z" fill="#27a048" /><circle cx="12" cy="13" r="5.500" fill="#fff" /><circle cx="12" cy="13" r="4.300" fill="#3a7df0" /></>],
  ["ProRealTime", <><path d="M17 0v24M7 10v16" stroke="#888" /><rect x="3" y="13" width="8" height="13" fill="#f06868" stroke="#a03030" /><rect x="13" y="4" width="8" height="18" fill="#42d850" stroke="#107820" /></>],
]

function Taskbar() {
  return (
    <footer className="flex h-[29px] items-start overflow-hidden border-b border-[#777] bg-[#101010] text-white">
      {APPS.map(([name, icon], i) => (
        <button key={name} type="button" title={name} className={`flex h-10 w-[49px] shrink-0 justify-center pt-2 ${i === 12 ? "bg-[#333]" : ""}`}>
          <svg width="24" height="26" viewBox="0 0 24 26">{icon}</svg>
        </button>
      ))}
      <div className="ml-auto w-[76px] pt-[2px] text-center font-['Open_Sans',sans-serif] text-[11px] leading-[17px]">
        21:03<br />30/11/2023
      </div>
    </footer>
  )
}

export default function App() {
  return (
    <div className="flex h-screen flex-col overflow-hidden bg-white font-['Liberation_Sans',Arial,sans-serif] text-[11px] leading-[14px] text-[#111]">
      <div className="flex min-h-0 flex-1">
        <main className="flex min-w-0 flex-1 flex-col border-t border-l border-[#7c929d]">
          <MenuBar />
          <Toolbar />
          <div className="h-px bg-[#d5e2e8]" />
          <TitleBar />
          <TradingPanel />
          <div className="relative flex min-h-0 flex-1 border-t border-[#6f8790]">
            <div className="min-w-0 flex-1"><Chart /></div>
            <PriceAxis />
            <IndicatorBar />
          </div>
          <TimeAxis />
          <BottomBar />
        </main>
        <div className="w-1 border-l-2 border-[#46555f] bg-[#eef3f6]" />
      </div>
      <Taskbar />
    </div>
  )
}
